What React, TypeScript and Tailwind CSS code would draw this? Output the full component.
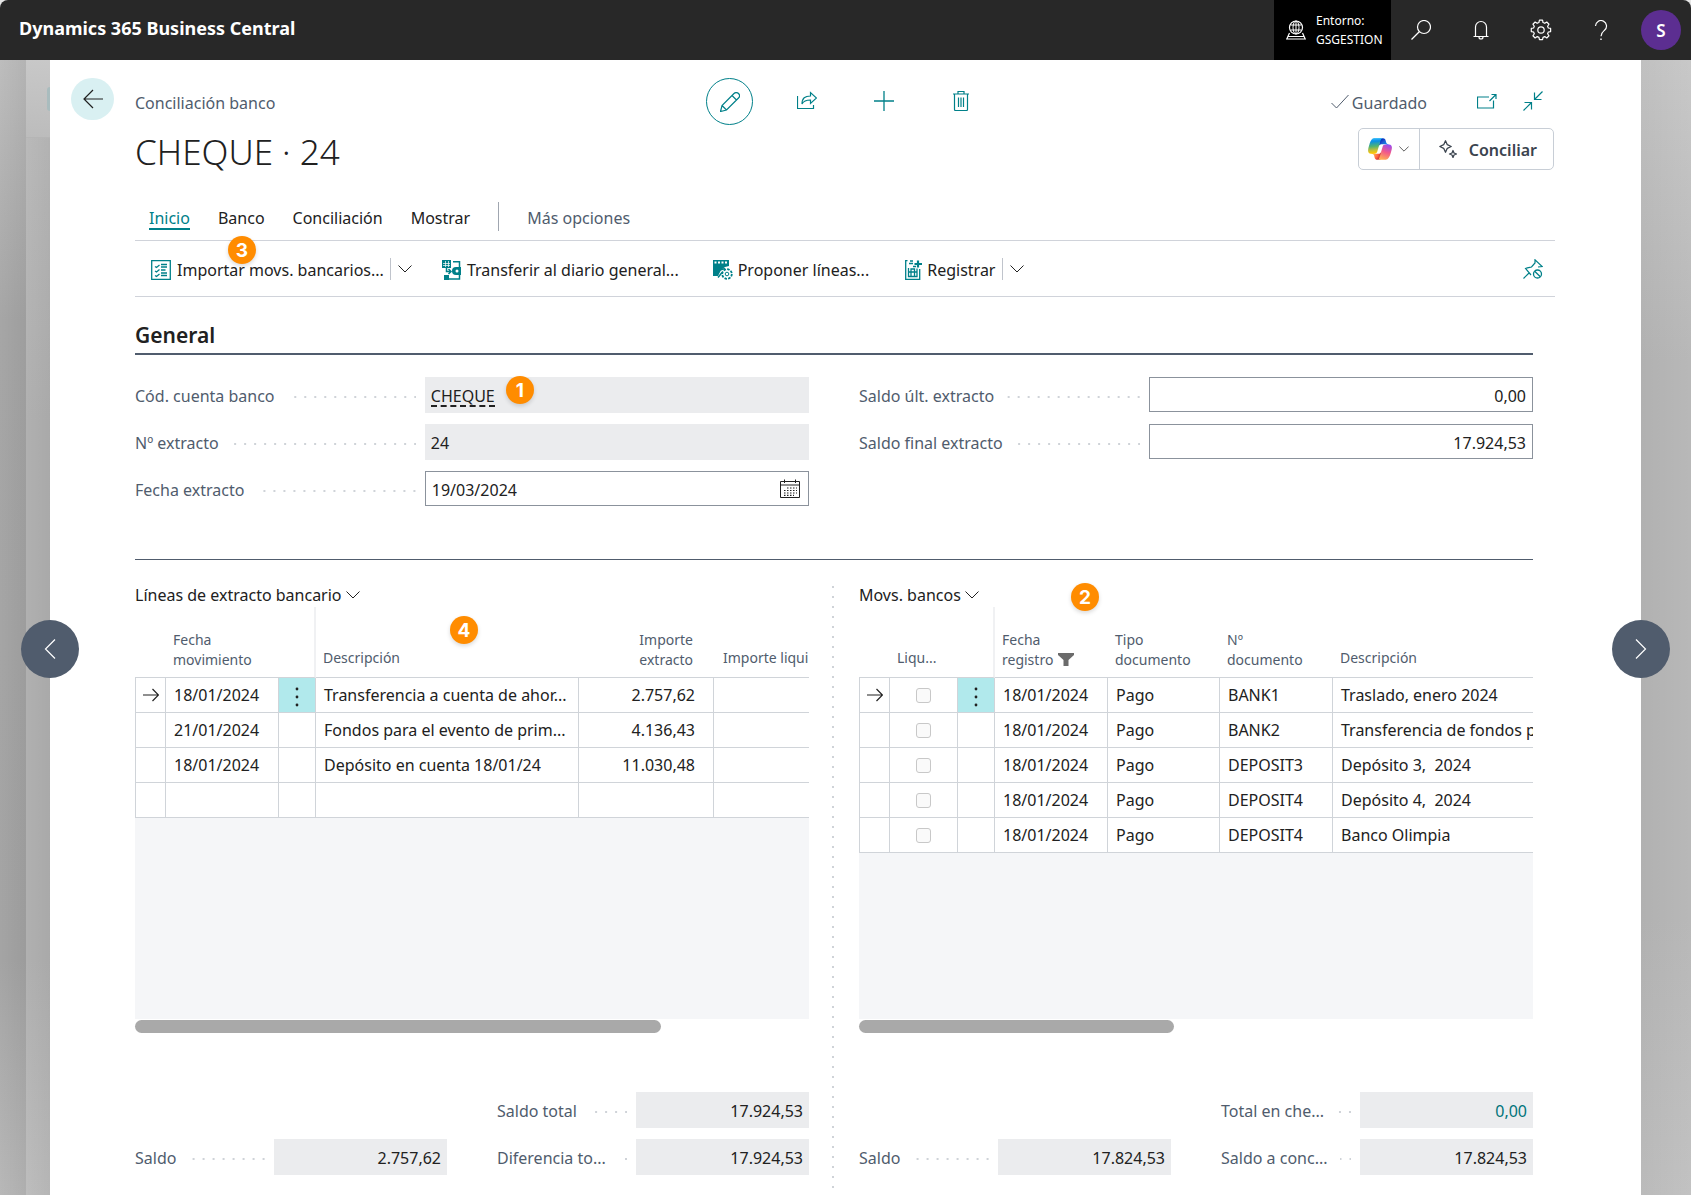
import React, { useId } from "react";

const FONT = "font-['Noto_Sans','Open_Sans',sans-serif]";

type IconProps = { className?: string; children?: React.ReactNode; box?: string };

function Icon({ className = "size-5", children, box = "0 0 20 20" }: IconProps) {
  return (
    <svg viewBox={box} className={`shrink-0 ${className}`} fill="none" stroke="currentColor" strokeWidth={1} aria-hidden="true">
      {children}
    </svg>
  );
}

const Chevron = ({ className = "h-[14px] w-[14px]" }: { className?: string }) => (
  <Icon className={className} box="0 0 14 14">
    <path d="M0.5 3.5 7 10l6.5-6.5" />
  </Icon>
);

const RowArrow = () => (
  <Icon className="mx-auto h-4 w-4" box="0 0 16 16">
    <path d="M0 8h15M9.500 2l6 6-6 6" strokeWidth={1.2} />
  </Icon>
);

function Copilot() {
  return (
    <svg viewBox="0 0 48 48" className="size-[26px] shrink-0" aria-hidden="true">
      <defs>
        <radialGradient id="cpA" cx="0" cy="0" r="1" gradientUnits="userSpaceOnUse" gradientTransform="translate(38 20.500) rotate(-129) scale(17.300 16.200)">
          <stop offset="0.09" stopColor="#00AEFF" />
          <stop offset="0.77" stopColor="#2253CE" />
          <stop offset="1" stopColor="#0736C4" />
        </radialGradient>
        <radialGradient id="cpB" cx="0" cy="0" r="1" gradientUnits="userSpaceOnUse" gradientTransform="translate(11 32.700) rotate(52) scale(16 15.500)">
          <stop offset="0" stopColor="#FFB657" />
          <stop offset="0.63" stopColor="#FF5F3D" />
          <stop offset="0.92" stopColor="#C02B3C" />
        </radialGradient>
        <linearGradient id="cpC" x1="12.500" y1="7.500" x2="14.800" y2="33" gradientUnits="userSpaceOnUse">
          <stop offset="0.1" stopColor="#0D91E1" />
          <stop offset="0.45" stopColor="#52B471" />
          <stop offset="0.7" stopColor="#BBBD42" />
          <stop offset="0.94" stopColor="#FFC800" />
        </linearGradient>
        <linearGradient id="cpD" x1="14.500" y1="4" x2="15.800" y2="32.500" gradientUnits="userSpaceOnUse">
          <stop offset="0" stopColor="#3DCBFF" />
          <stop offset="0.25" stopColor="#0588F7" stopOpacity="0" />
        </linearGradient>
        <radialGradient id="cpE" cx="0" cy="0" r="1" gradientUnits="userSpaceOnUse" gradientTransform="translate(41.300 12) rotate(110) scale(38.400 46)">
          <stop offset="0.07" stopColor="#8C48FF" />
          <stop offset="0.5" stopColor="#F2598A" />
          <stop offset="0.9" stopColor="#FFB152" />
        </radialGradient>
      </defs>
      <path fill="url(#cpA)" d="M34.142 7.325C33.563 5.354 31.754 4 29.699 4h-1.350c-2.235 0-4.150 1.596-4.554 3.794L21.480 20.407l.575-1.965c.574-1.965 2.375-3.315 4.422-3.315h7.850l3.293 1.283 3.174-1.283h-.927c-2.054 0-3.863-1.354-4.443-3.325l-1.282-4.477Z" />
      <path fill="url(#cpB)" d="M14.331 40.656C14.904 42.637 16.718 44 18.780 44h2.869c2.510 0 4.562-2.002 4.623-4.512l.313-12.160-.654 2.233c-.575 1.965-2.376 3.315-4.422 3.315h-7.916l-2.821-1.531-3.055 1.531h.911c2.062 0 3.875 1.363 4.449 3.344l1.254 4.436Z" />
      <path fill="url(#cpC)" d="M29.499 4H13.460c-4.582 0-7.332 5.988-9.165 11.975C2.123 23.070-.719 32.557 7.503 32.557h6.927c2.070 0 3.887-1.370 4.456-3.361 1.205-4.214 3.316-11.564 4.975-17.159.843-2.844 1.545-5.286 2.623-6.807C27.088 4.377 28.095 4 29.499 4Z" />
      <path fill="url(#cpD)" d="M29.499 4H13.460c-4.582 0-7.332 5.988-9.165 11.975C2.123 23.070-.719 32.557 7.503 32.557h6.927c2.070 0 3.887-1.370 4.456-3.361 1.205-4.214 3.316-11.564 4.975-17.159.843-2.844 1.545-5.286 2.623-6.807C27.088 4.377 28.095 4 29.499 4Z" />
      <path fill="url(#cpE)" d="M18.498 44h16.039c4.583 0 7.332-5.981 9.165-11.962 2.172-7.087 5.014-16.564-3.208-16.564h-6.927c-2.070 0-3.887 1.370-4.456 3.361-1.205 4.214-3.316 11.564-4.975 17.153-.843 2.844-1.545 5.286-2.622 6.799C20.909 43.628 19.902 44 18.498 44Z" />
    </svg>
  );
}

function Badge({ n, className }: { n: number; className: string }) {
  return (
    <span className={`absolute z-10 flex size-7 items-center justify-center rounded-full bg-[#ff8c00] font-['Inter',sans-serif] text-[19px] font-bold leading-none text-white shadow-[0_2px_4px_rgba(0,0,0,0.15)] ${className}`}>
      {n}
    </span>
  );
}

const Dots = () => (
  <span className="mt-1 h-[2px] flex-1 bg-[linear-gradient(to_left,#cfd3d8_2px,transparent_2px)] bg-[length:10px_2px] bg-right bg-repeat-x" />
);

type FieldProps = {
  label: string;
  value: string;
  editable?: boolean;
  numeric?: boolean;
  teal?: boolean;
  half?: boolean;
  trailing?: React.ReactNode;
};

function Field({ label, value, editable, numeric, teal, half, trailing }: FieldProps) {
  const id = useId();
  return (
    <div className="flex h-9 items-center">
      <div className={`flex items-center gap-3 whitespace-nowrap pr-[9px] text-[#505c6d] ${half ? "w-[139px]" : "w-[43%]"}`}>
        <label htmlFor={id} className="pt-[2px]">{label}</label>
        <Dots />
      </div>
      <div className={`relative flex min-w-0 flex-1 items-center ${editable ? "h-[35px] self-start border border-[#8b929c] bg-white" : "h-full bg-[#ebecee]"}`}>
        <input
          id={id}
          defaultValue={value}
          readOnly={!editable}
          className={`h-full w-full min-w-0 bg-transparent px-[6px] pt-[2px] outline-none ${numeric ? "text-right" : ""} ${teal ? "text-[#00747a]" : "text-[#212121]"}`}
        />
        {trailing}
      </div>
    </div>
  );
}

function HeaderCell({ lines, className = "", children }: { lines: string[]; className?: string; children?: React.ReactNode }) {
  return (
    <th scope="col" className={`relative h-[71px] border-b border-[#d0d4d9] px-[7px] align-bottom text-[14px] font-normal leading-5 text-[#505c6d] ${lines.length > 1 ? "pb-[7px]" : "pb-[9px]"} ${className}`}>
      {lines.map((l, i) => (
        <span key={l} className="flex items-center gap-[6px] whitespace-nowrap">
          <span className={className.includes("text-right") ? "ml-auto" : ""}>{l}</span>
          {i === lines.length - 1 && children}
        </span>
      ))}
    </th>
  );
}

const cell = "h-[35px] whitespace-nowrap border-b border-r border-[#d0d4d9] px-2 align-middle bg-white";
const iconCell = "h-[35px] border-b border-r border-[#d0d4d9] p-0 text-center align-middle bg-white";

function MoreCell({ active }: { active: boolean }) {
  return (
    <td className={`h-[35px] border-b border-r border-[#d0d4d9] p-0 ${active ? "bg-[#b1e9ec]" : "bg-white"}`}>
      {active && (
        <button type="button" aria-label="Más acciones" className="flex h-full w-full items-center justify-center">
          <svg viewBox="0 0 4 20" className="mt-1 h-5 w-1" fill="#212121" aria-hidden="true">
            <circle cx="2" cy="2" r="1.400" />
            <circle cx="2" cy="10" r="1.400" />
            <circle cx="2" cy="18" r="1.400" />
          </svg>
        </button>
      )}
    </td>
  );
}

const statementLines = [
  ["18/01/2024", "Transferencia a cuenta de ahor...", "2.757,62"],
  ["21/01/2024", "Fondos para el evento de prim...", "4.136,43"],
  ["18/01/2024", "Depósito en cuenta 18/01/24", "11.030,48"],
  ["", "", ""],
];

const ledgerEntries = [
  ["18/01/2024", "Pago", "BANK1", "Traslado, enero 2024"],
  ["18/01/2024", "Pago", "BANK2", "Transferencia de fondos p"],
  ["18/01/2024", "Pago", "DEPOSIT3", "Depósito 3,\u00a0 2024"],
  ["18/01/2024", "Pago", "DEPOSIT4", "Depósito 4,\u00a0 2024"],
  ["18/01/2024", "Pago", "DEPOSIT4", "Banco Olimpia"],
];

function StatementTable() {
  return (
    <table className="w-[760px] table-fixed border-separate border-spacing-0 text-left">
      <colgroup>
        <col className="w-[31px]" />
        <col className="w-[113px]" />
        <col className="w-[37px]" />
        <col className="w-[263px]" />
        <col className="w-[135px]" />
        <col />
      </colgroup>
      <thead>
        <tr>
          <HeaderCell lines={[]} />
          <HeaderCell lines={["Fecha", "movimiento"]} />
          <HeaderCell lines={[]} className="border-r-2 border-r-[#f0f1f3]" />
          <HeaderCell lines={["Descripción"]} />
          <HeaderCell lines={["Importe", "extracto"]} className="pr-[21px] text-right" />
          <HeaderCell lines={["Importe liqui"]} className="pl-[9px]" />
        </tr>
      </thead>
      <tbody>
        {statementLines.map(([date, text, amount], i) => (
          <tr key={i}>
            <td className={`${iconCell} border-l`}>{i === 0 && <RowArrow />}</td>
            <td className={cell}>{date}</td>
            <MoreCell active={i === 0} />
            <td className={cell}>{text}</td>
            <td className={`${cell} pr-[18px] text-right`}>{amount}</td>
            <td className={cell} />
          </tr>
        ))}
      </tbody>
    </table>
  );
}

function LedgerTable() {
  return (
    <table className="w-[760px] table-fixed border-separate border-spacing-0 text-left">
      <colgroup>
        <col className="w-[31px]" />
        <col className="w-[68px]" />
        <col className="w-[37px]" />
        <col className="w-[113px]" />
        <col className="w-[112px]" />
        <col className="w-[113px]" />
        <col />
      </colgroup>
      <thead>
        <tr>
          <HeaderCell lines={[]} />
          <HeaderCell lines={["Liqu..."]} />
          <HeaderCell lines={[]} className="border-r-2 border-r-[#f0f1f3]" />
          <HeaderCell lines={["Fecha", "registro"]}>
            <svg viewBox="0 0 16 14" className="-ml-px h-[14px] w-4" fill="#6b6b6b" aria-hidden="true">
              <path d="M0 0h16v2l-5.500 5v6h-5V7L0 2Z" />
            </svg>
          </HeaderCell>
          <HeaderCell lines={["Tipo", "documento"]} />
          <HeaderCell lines={["Nº", "documento"]} />
          <HeaderCell lines={["Descripción"]} />
        </tr>
      </thead>
      <tbody>
        {ledgerEntries.map(([date, type, doc, text], i) => (
          <tr key={i}>
            <td className={`${iconCell} border-l`}>{i === 0 && <RowArrow />}</td>
            <td className={iconCell}>
              <input
                type="checkbox"
                aria-label={`Liquidado ${doc} ${i + 1}`}
                className="mx-auto block size-[15px] appearance-none rounded-[3px] border border-[#c8c8c8] bg-[#fafafa]"
              />
            </td>
            <MoreCell active={i === 0} />
            <td className={cell}>{date}</td>
            <td className={cell}>{type}</td>
            <td className={cell}>{doc}</td>
            <td className={cell}>{text}</td>
          </tr>
        ))}
      </tbody>
    </table>
  );
}

function Part({ title, thumb, children, badge, totals }: { title: string; thumb: string; children: React.ReactNode; badge?: React.ReactNode; totals: React.ReactNode }) {
  return (
    <section className="relative min-w-0 pt-5">
      <h3 className="h-[27px]">
        <button type="button" className="flex items-center gap-1 pt-[3px] leading-6">
          {title}
          <Chevron />
        </button>
      </h3>
      {badge}
      <div className="h-[412px] overflow-hidden bg-[linear-gradient(to_bottom,#ffffff_70px,#f5f6f8_70px)]">{children}</div>
      <div className={`mt-px h-[13px] rounded-full bg-[#a9a9a9] ${thumb}`} />
      <div className="mt-[59px] grid grid-cols-2 gap-x-[50px] gap-y-[11px]">{totals}</div>
    </section>
  );
}

const tabs = ["Banco", "Conciliación", "Mostrar"];

export default function App() {
  return (
    <div className={`flex min-h-screen flex-col bg-[#b3b3b3] text-[16px] text-[#212121] ${FONT}`}>
      <div className="bg-[#e6e6e6]">
        <header className="flex h-[60px] items-stretch rounded-t-[8px] bg-[#282828] text-white">
          <h1 className="flex flex-1 items-center pb-[4px] pl-[19px] text-[18px] font-bold">Dynamics 365 Business Central</h1>
          <button type="button" className="flex w-[117px] items-center gap-[10px] bg-black pl-3 text-left text-[12px] leading-[19px]">
            <Icon>
              <circle cx="10" cy="7.500" r="6.500" strokeWidth={1.200} />
              <ellipse cx="10" cy="7.500" rx="3" ry="6.500" />
              <path d="M10 1v13M4.500 5h11M4.500 10h11" />
              <path strokeWidth={1.200} d="M3.500 13 0.800 19h18.400l-2.700-6M2 16.500h16" />
            </Icon>
            <span>Entorno:<br />GSGESTION</span>
          </button>
          <button type="button" aria-label="Buscar" className="flex w-[60px] items-center justify-center">
            <Icon><circle cx="13" cy="7" r="6.500" strokeWidth={1.2} /><path d="M8.500 11.500 0.500 19.500" strokeWidth={1.2} /></Icon>
          </button>
          <button type="button" aria-label="Notificaciones" className="flex w-[60px] items-center justify-center">
            <Icon><path d="M2.500 16.500h15M4.500 16.500V7a5.500 5.500 0 0 1 11 0v9.500M8 17a2 2 0 0 0 4 0" strokeWidth={1.2} /></Icon>
          </button>
          <button type="button" aria-label="Configuración" className="flex w-[60px] items-center justify-center">
            <Icon box="0 0.700 24 24" className="size-[22px]">
              <path strokeWidth={1.3} strokeLinejoin="round" d="M10.300 2h3.400l.5 2.600 1.900.8L18.300 4l2.400 2.400-1.500 2.200.8 1.900 2.500.5v3.400l-2.500.5-.8 1.900 1.500 2.200-2.400 2.400-2.200-1.500-1.900.8-.5 2.600h-3.400l-.5-2.600-1.900-.8L5.600 21.400 3.200 19l1.500-2.200-.8-1.900-2.500-.5V11l2.500-.5.8-1.900L3.200 6.400 5.600 4l2.200 1.400 1.900-.8Z" />
              <circle cx="12" cy="12.700" r="3.500" strokeWidth={1.3} />
            </Icon>
          </button>
          <button type="button" aria-label="Ayuda" className="flex w-[60px] items-center justify-center">
            <Icon><path d="M4.500 6a5.500 5.500 0 1 1 9 4.300c-2 1.700-3.500 2.700-3.500 6" strokeWidth={1.2} /><path d="M10 18.500v1.500" strokeWidth={1.400} /></Icon>
          </button>
          <button type="button" aria-label="Cuenta" className="flex w-[60px] items-center justify-center">
            <span className="flex size-10 items-center justify-center rounded-full bg-[#5c2e91] pt-[2px] text-[17px] font-semibold">S</span>
          </button>
        </header>
      </div>

      <div className="flex flex-1">
        <div className="flex w-[50px] shrink-0">
          <div className="w-[26px] bg-[linear-gradient(to_right,rgba(0,0,0,0),rgba(0,0,0,0.05)),linear-gradient(to_bottom,#bdbdbd,#a6a6a6_260px,#a4a4a4_900px,#b8b8b8)]" />
          <div className="flex flex-1 flex-col bg-[linear-gradient(to_right,rgba(0,0,0,0),rgba(0,0,0,0.04)),linear-gradient(to_bottom,#bcbcbc,#b0b0b0_360px,#b0b0b0_900px,#bdbdbd)]">
            <div className="flex h-[78px] justify-end overflow-hidden border-b border-[#b5b5b5] bg-[linear-gradient(to_bottom,#c8c8c8,#bcbcbc)] pt-[27px]">
              <span className="h-6 w-[3px] rounded-l-full bg-[#a9bcbe]" />
            </div>
          </div>
        </div>

        <main className="relative flex min-w-0 flex-1 bg-white">
          <button type="button" aria-label="Registro anterior" className="absolute -left-[29px] top-[560px] z-10 flex size-[58px] items-center justify-center rounded-full bg-[#505c6d] text-white">
            <Icon><path d="M15 0.500 5.500 10l9.500 9.500" strokeWidth={1.2} /></Icon>
          </button>
          <button type="button" aria-label="Registro siguiente" className="absolute -right-[29px] top-[560px] z-10 flex size-[58px] items-center justify-center rounded-full bg-[#505c6d] text-white">
            <Icon><path d="M5 0.500 14.500 10 5 19.500" strokeWidth={1.2} /></Icon>
          </button>

          <div className="w-[85px] shrink-0 pl-[21px] pt-[18px]">
            <button type="button" aria-label="Atrás" className="flex h-[42px] w-[43px] items-center justify-center rounded-full bg-[#d9f0f2]">
              <Icon><path d="M20 10H1M10 1l-9 9 9 9" strokeWidth={1.2} /></Icon>
            </button>
          </div>

          <div className="mr-[86px] min-w-0 flex-1 pb-5 pt-[18px]">
            <div className="grid h-[47px] grid-cols-[1fr_auto_1fr] items-center text-[#505c6d]">
              <span className="pt-[2px]">Conciliación banco</span>
              <div className="flex items-center gap-[30px] text-[#008089]">
                <button type="button" aria-label="Editar" className="flex size-[47px] items-center justify-center rounded-full border border-[#008089]">
                  <Icon><path d="M0.500 19.500l1.500-6L14 1.500a3 3 0 0 1 4.500 4.500L6.500 18ZM12 3.500 16.500 8M2 13.500 6.500 18" strokeWidth={1.200} /></Icon>
                </button>
                <button type="button" aria-label="Compartir" className="flex size-[47px] items-center justify-center pb-[2px]">
                  <Icon><path d="M0.500 5v12.500h16V14M5 13c0-6 3-8 8.500-8V1.500l6 5.500-6 5.500V9C9 9 6.500 10 5 13Z" strokeWidth={1.200} /></Icon>
                </button>
                <button type="button" aria-label="Nuevo" className="flex size-[47px] items-center justify-center pb-[2px]">
                  <Icon box="0 0 20 20"><path d="M10 0v20M0 10h20" strokeWidth={1.3} /></Icon>
                </button>
                <button type="button" aria-label="Eliminar" className="flex size-[47px] items-center justify-center pb-[2px]">
                  <Icon><path d="M2 3h16M3.500 3v15.500q0 1 1 1h11q1 0 1-1V3M7 3V0.500h6V3M7.500 6.500v9.500M10 6.500v9.500M12.500 6.500v9.500" strokeWidth={1.200} /></Icon>
                </button>
              </div>
              <div className="flex items-center justify-end">
                <Icon className="mr-[3px] h-5 w-[18px]" box="0 0 18 20"><path d="M0.500 11l5 5L17.500 3" /></Icon>
                <span className="pt-[2px]">Guardado</span>
                <button type="button" aria-label="Abrir en ventana nueva" className="ml-[50px] text-[#008089]">
                  <Icon><path d="M12 5H0.500v11h16v-7.500M12.500 9l6.500-6.500M14.500 2.500H19V7" strokeWidth={1.200} /></Icon>
                </button>
                <button type="button" aria-label="Contraer" className="ml-[26px] mr-[12px] pb-px text-[#008089]">
                  <Icon><path d="M19.500 0.500 12 8M11.500 1.500v7h7M0.500 19.500 8 12M1.500 11.500h7v7" strokeWidth={1.200} /></Icon>
                </button>
              </div>
            </div>

            <div className="flex h-[52px] items-start justify-between">
              <h2 className="text-[35px] font-light leading-[54px]">CHEQUE · 24</h2>
              <div className="mr-px mt-[3px] flex h-[42px] items-stretch rounded-[5px] border border-[#c8ced6]">
                <button type="button" aria-label="Copilot" className="flex w-[61px] items-center gap-[6px] border-r border-[#c8ced6] pl-2">
                  <Copilot />
                  <Chevron className="h-[10px] w-[10px]" />
                </button>
                <button type="button" className="flex items-center gap-3 pl-[19px] pr-4 font-semibold text-[#3b444f]">
                  <Icon className="size-[18px]" box="0 0 18 18">
                    <path strokeWidth={1.3} strokeLinejoin="round" d="M6.500 0.800 8.300 4.700 12.200 6.500 8.300 8.300 6.500 12.200 4.700 8.300 0.800 6.500 4.700 4.700ZM14 10.500 15 13 17.500 14 15 15 14 17.500 13 15 10.500 14 13 13Z" />
                  </Icon>
                  <span className="pt-[2px]">Conciliar</span>
                </button>
              </div>
            </div>

            <nav className="mt-[25px] flex h-[39px] items-start gap-7 border-b border-[#d0d3da] pl-[14px] leading-8">
              <button type="button" className="relative text-[#008089] after:absolute after:inset-x-0 after:bottom-1 after:h-[2px] after:bg-[#008089]">Inicio</button>
              {tabs.map((t) => (
                <button key={t} type="button">{t}</button>
              ))}
              <span className="h-[29px] w-px bg-[#a0a6b0]" />
              <button type="button" className="text-[#505c6d]">Más opciones</button>
            </nav>

            <div className="relative flex h-[56px] items-center border-b border-[#d0d3da] pl-4">
              <Badge n={3} className="-top-[5px] left-[93px]" />
              <button type="button" className="flex items-center gap-[6px] pt-[2px]">
                <Icon className="size-5 text-[#008089]"><path strokeWidth={1.3} d="M0.700 0.700h18.600v18.600H0.700ZM10 4.500h6M10 7h6M10 10h4.500M10 13h6M10 15.500h6M4 6.500l1.500 1 3-2.500M4 11l1.500 1 3-2.500M4 15.500l1.500 1 3-2.500" /></Icon>
                Importar movs. bancarios...
              </button>
              <span className="ml-[6px] h-[22px] w-px bg-[#c0c4cc]" />
              <button type="button" aria-label="Más opciones de importación" className="ml-[7px]"><Chevron /></button>
              <button type="button" className="ml-[30px] flex items-center gap-[5px] pt-[2px]">
                <Icon className="size-5 text-[#008089]">
                  <path fill="currentColor" stroke="none" d="M0 0h9v8H0ZM14 7h5v8h-5a4 4 0 0 1 0-8ZM2 15h5v5H2Z" />
                  <path stroke="white" d="M3.500 1v6M6.500 1v6M1 3.500h7M1 5.500h7" strokeWidth={0.7} />
                  <circle cx="15" cy="11" r="1.500" fill="white" stroke="none" />
                  <path strokeWidth={1.500} d="M11 1.700h6.500V7M17.500 15v4H5M4.500 8v3.500h4M6.500 9l2.500 2.500L6.500 14" />
                </Icon>
                Transferir al diario general...
              </button>
              <button type="button" className="ml-[34px] flex items-center gap-[5px] pt-[2px]">
                <Icon className="size-5 text-[#008089]">
                  <path fill="currentColor" stroke="none" d="M0 0h16v6l-4 1-4 3-3 6H0Z" />
                  <path stroke="white" d="M1.500 2.500h2M5 2.500h2M8.500 2.500h2M12 2.500h2" strokeWidth={2} />
                  <circle cx="14" cy="14" r="4.800" strokeWidth={1.800} strokeDasharray="2.500 1.200" />
                  <circle cx="14" cy="14" r="1.800" />
                  <path d="M5 17.500l4-5M7 10l5-1.500" strokeWidth={1.500} />
                </Icon>
                Proponer líneas...
              </button>
              <button type="button" className="ml-[35px] flex items-center gap-[3px] pt-[2px]">
                <Icon className="size-5 text-[#008089]">
                  <path strokeWidth={1.300} d="M3.500 0.700H1.700v18.600h14V9M4.500 8v8.500h8.500V8.500M7 16V9h3.500v7M4.500 12h8.500M5 3.500h4M6 1h3M9 6.500h3" />
                  <path d="M14 0.500v7M10.500 4h7.500" strokeWidth={2.200} />
                </Icon>
                Registrar
              </button>
              <span className="ml-[7px] h-[22px] w-px bg-[#c0c4cc]" />
              <button type="button" aria-label="Más opciones de registro" className="ml-[7px]"><Chevron /></button>
              <button type="button" aria-label="Desanclar" className="ml-auto mr-[12px] text-[#008089]">
                <Icon><path strokeWidth={1.200} d="M0.500 19.500l5.500-5.500M8 16 2.500 9.500C5 8 7 8.500 8.500 8L12 4V0.800L19.200 7.500 15 8" /><circle cx="14.500" cy="15" r="4" strokeWidth={1.300} /><path strokeWidth={1.300} d="M11.700 12.200l5.600 5.600" /></Icon>
              </button>
            </div>

            <div className="mr-[22px]">
              <h2 className="border-b-2 border-[#505c6d] pb-1 pt-6 text-[21px] font-semibold leading-7">General</h2>
              <div className="grid grid-cols-2 gap-x-[50px] pt-[22px]">
                <div className="grid gap-[11px]">
                  <div className="flex h-9 items-center">
                    <div className="flex w-[43%] items-center gap-3 whitespace-nowrap pr-[9px] text-[#505c6d]">
                      <span className="pt-[2px]">Cód. cuenta banco</span>
                      <Dots />
                    </div>
                    <div className="relative flex h-full flex-1 items-center bg-[#ebecee] px-[6px] pt-1">
                      <a href="#cheque" className="border-b-2 border-dashed border-[#212121] leading-[18px]">CHEQUE</a>
                      <Badge n={1} className="-top-px left-[81px]" />
                    </div>
                  </div>
                  <Field label="Nº extracto" value="24" />
                  <Field
                    label="Fecha extracto"
                    value="19/03/2024"
                    editable
                    trailing={
                      <button type="button" aria-label="Elegir fecha" className="mr-2">
                        <Icon className="size-5">
                          <path d="M0.500 2.500h19v16h-19ZM0.500 6h19M4.500 0.500V4M15.500 0.500V4" />
                          <path strokeWidth={1.2} strokeDasharray="1.500 1.500" d="M7 9h10M4 11.500h13M4 14h13M4 16.300h10" />
                        </Icon>
                      </button>
                    }
                  />
                </div>
                <div className="grid content-start gap-[11px]">
                  <Field label="Saldo últ. extracto" value="0,00" editable numeric />
                  <Field label="Saldo final extracto" value="17.924,53" editable numeric />
                </div>
              </div>

              <div className="mt-[52px] grid grid-cols-[minmax(0,1fr)_50px_minmax(0,1fr)] border-t border-[#505c6d]">
                <Part
                  title="Líneas de extracto bancario"
                  thumb="w-[78%]"
                  badge={<Badge n={4} className="left-[315px] top-[56px]" />}
                  totals={
                    <>
                      <span />
                      <Field label="Saldo total" value="17.924,53" numeric half />
                      <Field label="Saldo" value="2.757,62" numeric half />
                      <Field label="Diferencia to..." value="17.924,53" numeric half />
                    </>
                  }
                >
                  <StatementTable />
                </Part>
                <div className="-mb-5 ml-[23px] mt-[26px] w-[2px] bg-[linear-gradient(to_bottom,#cfd3d8_2px,transparent_2px)] bg-[length:2px_10px] bg-repeat-y" />
                <Part
                  title="Movs. bancos"
                  thumb="w-7/15"
                  badge={<Badge n={2} className="left-[212px] top-[23px]" />}
                  totals={
                    <>
                      <span />
                      <Field label="Total en che..." value="0,00" numeric half teal />
                      <Field label="Saldo" value="17.824,53" numeric half />
                      <Field label="Saldo a conc..." value="17.824,53" numeric half />
                    </>
                  }
                >
                  <LedgerTable />
                </Part>
              </div>
            </div>
          </div>
        </main>

        <div className="w-[50px] shrink-0 bg-[linear-gradient(to_right,rgba(0,0,0,0.04),rgba(0,0,0,0)),linear-gradient(to_bottom,#c8c8c8,#b8b8b8_300px,#b8b8b8_860px,#c2c2c2)]" />
      </div>
    </div>
  );
}
